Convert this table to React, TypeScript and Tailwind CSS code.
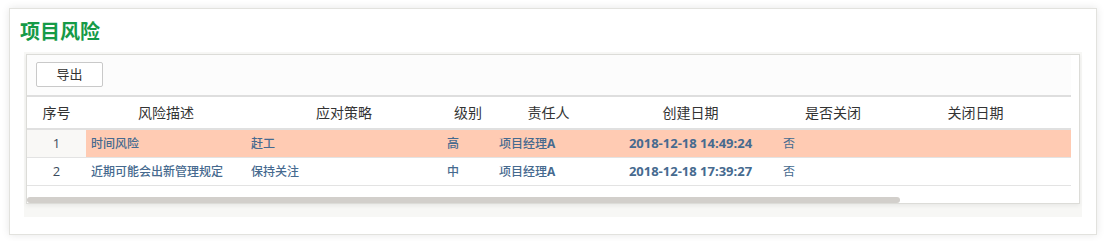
const columns = [
  { title: "序号", width: "w-[59px]" },
  { title: "风险描述", width: "w-[160px]" },
  { title: "应对策略", width: "w-[196px]" },
  { title: "级别", width: "w-[52px]" },
  { title: "责任人", width: "w-[109px]" },
  { title: "创建日期", width: "w-[175px]" },
  { title: "是否关闭", width: "w-[110px]" },
  { title: "关闭日期", width: "w-[175px]" },
];

const rows = [
  {
    no: 1,
    desc: "时间风险",
    plan: "赶工",
    level: "高",
    owner: "项目经理A",
    created: "2018-12-18 14:49:24",
    closed: "否",
    closedAt: "",
    highlight: true,
  },
  {
    no: 2,
    desc: "近期可能会出新管理规定",
    plan: "保持关注",
    level: "中",
    owner: "项目经理A",
    created: "2018-12-18 17:39:27",
    closed: "否",
    closedAt: "",
    highlight: false,
  },
];

// latin runs bold, CJK runs medium, like the original font fallback
function Mixed({ text }: { text: string }) {
  const parts = text.match(/[\x00-\x7f]+|[^\x00-\x7f]+/g) ?? [];
  return (
    <>
      {parts.map((p, i) => (
        <span
          key={i}
          className={/^[\x00-\x7f]+$/.test(p) ? "font-bold" : "font-medium"}
        >
          {p}
        </span>
      ))}
    </>
  );
}

export default function App() {
  return (
    <div
      className="w-[1109px] h-[241px] bg-white pt-[8px] pl-[9px]"
      style={{ fontFamily: '"Open Sans", "Noto Sans CJK SC", sans-serif' }}
    >
      <div className="w-[1088px] h-[227px] border border-[#e2e2de] bg-white shadow-[0_0_8px_rgba(0,0,0,0.10)] pt-[9px]">
        <h1 className="px-[10px] text-[20px] leading-[28px] font-bold text-[#159a47]">
          项目风险
        </h1>

        <div className="mx-[14px] mt-[6px] bg-[#f7f7f5] p-[2px] pb-[13px]">
          <div className="flex border border-[#dcdcd8] bg-white shadow-[0_2px_4px_rgba(0,0,0,0.06)]">
            <div className="w-[1044px]">
              <div className="h-[42px] bg-[#fcfcfc] border-b-2 border-[#dedede] pt-[6px] pl-[9px]">
                <button className="w-[67px] h-[25px] rounded-[2px] border border-[#c9c9c9] bg-white text-[13px] leading-[23px] text-[#333]">
                  导出
                </button>
              </div>

              <div className="flex h-[33px] border-b-2 border-[#e0e0e0] text-[14px] text-[#333]">
                {columns.map((c) => (
                  <div
                    key={c.title}
                    className={`${c.width} flex items-center justify-center`}
                  >
                    {c.title}
                  </div>
                ))}
                <div className="flex-1" />
              </div>

              {rows.map((r) => (
                <div
                  key={r.no}
                  className={`flex h-[28px] border-b border-[#e3e3e3] text-[12px] text-[#466a8f] ${
                    r.highlight ? "bg-[#ffcbb3]" : "bg-white"
                  }`}
                >
                  <div
                    className={`w-[59px] flex items-center justify-center text-[13px] text-[#3a4a5c] ${
                      r.highlight ? "bg-[#f9f8f6]" : "bg-white"
                    }`}
                  >
                    {r.no}
                  </div>
                  <div className="w-[160px] flex items-center pl-[5px]">
                    <Mixed text={r.desc} />
                  </div>
                  <div className="w-[196px] flex items-center pl-[5px]">
                    <Mixed text={r.plan} />
                  </div>
                  <div className="w-[52px] flex items-center pl-[5px]">
                    <Mixed text={r.level} />
                  </div>
                  <div className="w-[109px] flex items-center pl-[5px]">
                    <Mixed text={r.owner} />
                  </div>
                  <div className="w-[175px] flex items-center justify-center text-[13px]">
                    <Mixed text={r.created} />
                  </div>
                  <div className="w-[110px] flex items-center pl-[5px] font-normal">
                    {r.closed}
                  </div>
                  <div className="w-[175px] flex items-center pl-[5px]">
                    {r.closedAt}
                  </div>
                  <div className="flex-1" />
                </div>
              ))}

              <div className="mt-[11px] h-[6px] w-[873px] rounded-full bg-[#d2cfcb]" />
            </div>
            <div className="flex-1" />
          </div>
        </div>
      </div>
    </div>
  );
}
